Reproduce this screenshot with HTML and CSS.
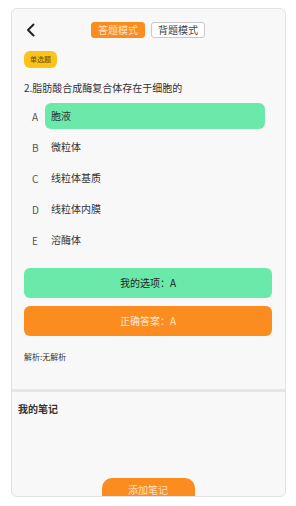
FILE: index.html
```html
<!DOCTYPE html>
<html>

<head>
    <title>答题</title>
    <link rel="stylesheet" href="styles.css">
</head>

<body>
    <div class="phone">
        <div class="quiz">
            <div class="header">
                <span class="back">
                    <svg width="9" height="14" viewBox="0 0 9 14"><path d="M7.5 1.5 L2 7 L7.5 12.5" fill="none" stroke="#222" stroke-width="2" stroke-linecap="round" stroke-linejoin="round"/></svg>
                </span>
                <div class="tabs">
                    <span class="tab active">答题模式</span>
                    <span class="tab">背题模式</span>
                </div>
            </div>

            <span class="badge">单选题</span>

            <p class="question">2.脂肪酸合成酶复合体存在于细胞的</p>

            <div class="options">
                <div class="option selected"><span class="letter">A</span><span class="text">胞液</span></div>
                <div class="option"><span class="letter">B</span><span class="text">微粒体</span></div>
                <div class="option"><span class="letter">C</span><span class="text">线粒体基质</span></div>
                <div class="option"><span class="letter">D</span><span class="text">线粒体内膜</span></div>
                <div class="option"><span class="letter">E</span><span class="text">溶酶体</span></div>
            </div>

            <div class="result mine">我的选项：A</div>
            <div class="result correct">正确答案：A</div>

            <p class="analysis">解析:无解析</p>
        </div>

        <div class="notes">
            <h3>我的笔记</h3>
            <div class="add-wrap">
                <span class="btn">添加笔记</span>
            </div>
        </div>
    </div>
</body>

</html>
```

FILE: styles.css
```css
body {
    margin: 0;
    background: #fff;
    font-family: "Noto Sans CJK SC", "Noto Sans", sans-serif;
    color: #333;
}

.phone {
    margin: 8px 0 0 11px;
    width: 273px;
    height: 487px;
    border: 1px solid #e2e2e2;
    border-radius: 6px;
    background: #f8f8f8;
    overflow: hidden;
    display: flex;
    flex-direction: column;
}

.quiz {
    padding: 12px 13px 0 12px;
    height: 368px;
    border-bottom: 3px solid #e6e6e6;
}

.header {
    display: flex;
    align-items: center;
    height: 17px;
}

.back {
    display: flex;
    margin-left: 2px;
    width: 9px;
}

.tabs {
    display: flex;
    gap: 6px;
    margin-left: 56px;
}

.tab {
    font-size: 10px;
    line-height: 14px;
    padding: 0 6px;
    border: 1px solid #c9c9c9;
    border-radius: 3px;
    background: #fff;
    color: #444;
}

.tab.active {
    background: #fb8c1f;
    border-color: #fb8c1f;
    color: #ffe3c6;
}

.badge {
    display: inline-block;
    margin-top: 13px;
    font-size: 7px;
    line-height: 17px;
    padding: 0 6px;
    border-radius: 6px;
    background: #fbc21a;
    color: #6a4a00;
}

.question {
    margin: 13px 0 0;
    font-size: 10px;
    line-height: 14px;
    color: #333;
}

.options {
    margin-top: 8px;
    display: flex;
    flex-direction: column;
    gap: 5px;
    padding-right: 7px;
}

.option {
    display: flex;
    align-items: center;
    height: 26px;
    font-size: 10px;
}

.letter {
    width: 21px;
    padding-left: 8px;
    box-sizing: border-box;
    color: #555;
}

.text {
    flex: 1;
    height: 26px;
    line-height: 26px;
    padding-left: 6px;
    border-radius: 6px;
    color: #333;
}

.option.selected .text {
    background: #6be9aa;
}

.result {
    height: 30px;
    line-height: 30px;
    text-align: center;
    font-size: 10px;
    border-radius: 6px;
}

.result.mine {
    margin-top: 15px;
    background: #6be9aa;
    color: #222;
}

.result.correct {
    margin-top: 8px;
    background: #fb8c1f;
    color: #ffe9d2;
}

.analysis {
    margin: 15px 0 0;
    font-size: 8px;
    line-height: 12px;
    color: #333;
}

.notes {
    flex: 1;
    padding: 0 6px;
    display: flex;
    flex-direction: column;
}

.notes h3 {
    margin: 10px 0 0;
    font-size: 10px;
    line-height: 14px;
    font-weight: bold;
    color: #333;
}

.add-wrap {
    flex: 1;
    display: flex;
    justify-content: center;
    align-items: flex-end;
}

.btn {
    width: 93px;
    height: 24px;
    margin-bottom: -6px;
    margin-left: -1px;
    line-height: 24px;
    text-align: center;
    font-size: 10px;
    background: #fb8c1f;
    color: #ffe3c6;
    border-radius: 10px 10px 0 0;
}
```
